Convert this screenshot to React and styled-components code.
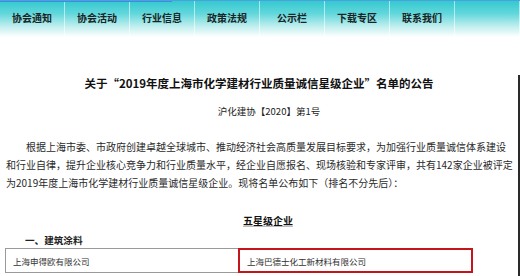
import React from 'react';
import styled, { createGlobalStyle } from 'styled-components';

const GlobalStyle = createGlobalStyle`
    html, body {
        margin: 0;
        padding: 0;
        background: #fff;
    }
    body {
        font-family: "Noto Sans CJK SC", "Liberation Sans", sans-serif;
        color: #1e1e1e;
    }
`;

const Page = styled.div`
    width: 520px;
    height: 276px;
    overflow: hidden;
    background: #fff;
`;

const Nav = styled.nav`
    position: relative;
    display: grid;
    grid-template-columns: repeat(8, 1fr);
    height: 36px;
    border-top: 1px solid #4d9fe0;
    background: linear-gradient(to bottom, #34c9d0 0%, #62d7db 35%, #bfeeee 70%, #ffffff 100%);

    &::before {
        content: '';
        position: absolute;
        left: 0;
        top: 0;
        width: 172px;
        height: 1px;
        background: #3e8fdb;
    }
`;

const NavItem = styled.a`
    display: flex;
    align-items: center;
    justify-content: center;
    padding-bottom: 4px;
    font-size: 10px;
    font-weight: 700;
    color: #182424;
    border-right: 1px solid rgba(255, 255, 255, 0.55);
    text-decoration: none;
`;

const Body = styled.section`
    height: 239px;
    border-right: 2px solid #2a2a2a;
    padding: 0 0 0 6px;
`;

const Title = styled.h1`
    margin: 38px 0 0 0;
    padding-right: 6px;
    font-size: 11.5px;
    line-height: 16px;
    font-weight: 700;
    text-align: center;
    color: #111;
`;

const DocNo = styled.p`
    margin: 13px 0 0 0;
    padding-left: 14px;
    font-size: 9.5px;
    line-height: 14px;
    text-align: center;
    color: #222;
`;

const Paragraph = styled.div`
    width: 506px;
    margin: 20px 0 0 0;
    font-size: 10px;
    line-height: 18px;
    color: #2a2a2a;
`;

const Line = styled.div`
    white-space: nowrap;
    padding-left: ${p => (p.$indent ? '20px' : '0')};
    text-align: justify;
    text-align-last: ${p => (p.$fill ? 'justify' : 'left')};
`;

const Level = styled.h2`
    margin: 22px 0 0 0;
    padding-left: 12px;
    font-size: 10px;
    line-height: 14px;
    font-weight: 700;
    text-align: center;
    text-decoration: underline;
    text-decoration-color: #bbb;
    color: #111;
`;

const Category = styled.h3`
    margin: 5px 0 0 19px;
    font-size: 9.6px;
    line-height: 14px;
    font-weight: 700;
    color: #222;
`;

const Table = styled.div`
    display: grid;
    grid-template-columns: 233px 233px;
    width: 466px;
    margin: 1px 0 0 -1px;
    border: 1px solid #9a9a9a;
`;

const Cell = styled.div`
    height: 23px;
    display: flex;
    align-items: center;
    padding-left: 7px;
    font-size: 8.5px;
    color: #333;
    border-left: ${p => (p.$marked ? '1px solid #9a9a9a' : 'none')};
    outline: ${p => (p.$marked ? '2.5px solid #c4141c' : 'none')};
    outline-offset: ${p => (p.$marked ? '-1px' : '0')};
`;

const navItems = ['协会通知', '协会活动', '行业信息', '政策法规', '公示栏', '下载专区', '联系我们', ''];

const App = () => {
    return (
        <Page>
            <GlobalStyle />
            <Nav>
                {navItems.map((item, i) => (
                    <NavItem key={i}>{item}</NavItem>
                ))}
            </Nav>
            <Body>
                <Title>关于“2019年度上海市化学建材行业质量诚信星级企业”名单的公告</Title>
                <DocNo>沪化建协【2020】第1号</DocNo>
                <Paragraph>
                    <Line $indent>根据上海市委、市政府创建卓越全球城市、推动经济社会高质量发展目标要求，为加强行业质量诚信体系建设</Line>
                    <Line $fill>和行业自律，提升企业核心竞争力和行业质量水平，经企业自愿报名、现场核验和专家评审，共有142家企业被评定</Line>
                    <Line>为2019年度上海市化学建材行业质量诚信星级企业。现将名单公布如下（排名不分先后）：</Line>
                </Paragraph>
                <Level>五星级企业</Level>
                <Category>一、建筑涂料</Category>
                <Table>
                    <Cell>上海申得欧有限公司</Cell>
                    <Cell $marked>上海巴德士化工新材料有限公司</Cell>
                </Table>
            </Body>
        </Page>
    );
};

export default App;
